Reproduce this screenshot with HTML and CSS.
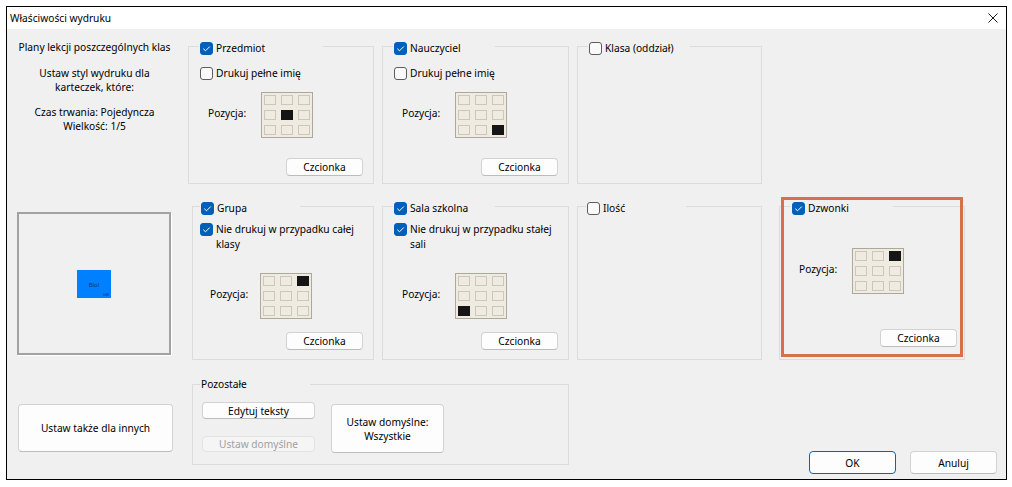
FILE: index.html
```html
<!DOCTYPE html>
<html lang="pl">
<head>
<meta charset="utf-8">
<title>Właściwości wydruku</title>
<link rel="stylesheet" href="styles.css">
</head>
<body>
<div class="window">
  <div class="titlebar">
    <span class="title">Właściwości wydruku</span>
    <svg class="close" viewBox="0 0 10 10"><path d="M0.5 0.5 L9.5 9.5 M9.5 0.5 L0.5 9.5" stroke="#1a1a1a" stroke-width="1" fill="none"/></svg>
  </div>
  <div class="content">
    <div class="info">
      <p>Plany lekcji poszczególnych klas</p>
      <p class="p2">Ustaw styl wydruku dla<br>karteczek, które:</p>
      <p class="p3">Czas trwania: Pojedyncza<br>Wielkość: 1/5</p>
    </div>

    <fieldset class="group prz">
      <legend class="wide"><span class="cb on"><svg viewBox="0 0 13 13"><path d="M3.3 6.7 L5.5 8.8 L9.8 4.5"/></svg></span><span>Przedmiot</span></legend>
      <div class="opt"><span class="cb"></span><span>Drukuj pełne imię</span></div>
      <div class="pos">
        <span class="pos-label">Pozycja:</span>
        <div class="pgrid"><i></i><i></i><i></i><i></i><i class="sel"></i><i></i><i></i><i></i><i></i></div>
      </div>
      <button class="btn font">Czcionka</button>
    </fieldset>

    <fieldset class="group nau">
      <legend><span class="cb on"><svg viewBox="0 0 13 13"><path d="M3.3 6.7 L5.5 8.8 L9.8 4.5"/></svg></span><span>Nauczyciel</span></legend>
      <div class="opt"><span class="cb"></span><span>Drukuj pełne imię</span></div>
      <div class="pos">
        <span class="pos-label">Pozycja:</span>
        <div class="pgrid"><i></i><i></i><i></i><i></i><i></i><i></i><i></i><i></i><i class="sel"></i></div>
      </div>
      <button class="btn font">Czcionka</button>
    </fieldset>

    <fieldset class="group kla">
      <legend><span class="cb"></span><span>Klasa (oddział)</span></legend>
    </fieldset>

    <div class="preview">
      <div class="tile"><span class="tb">Biol</span><span class="tk">kW</span></div>
    </div>

    <fieldset class="group r2 gru">
      <legend><span class="cb on"><svg viewBox="0 0 13 13"><path d="M3.3 6.7 L5.5 8.8 L9.8 4.5"/></svg></span><span>Grupa</span></legend>
      <div class="opt"><span class="cb on"><svg viewBox="0 0 13 13"><path d="M3.3 6.7 L5.5 8.8 L9.8 4.5"/></svg></span><span>Nie drukuj w przypadku całej<br>klasy</span></div>
      <div class="pos">
        <span class="pos-label">Pozycja:</span>
        <div class="pgrid"><i></i><i></i><i class="sel"></i><i></i><i></i><i></i><i></i><i></i><i></i></div>
      </div>
      <button class="btn font">Czcionka</button>
    </fieldset>

    <fieldset class="group r2 sal">
      <legend><span class="cb on"><svg viewBox="0 0 13 13"><path d="M3.3 6.7 L5.5 8.8 L9.8 4.5"/></svg></span><span>Sala szkolna</span></legend>
      <div class="opt"><span class="cb on"><svg viewBox="0 0 13 13"><path d="M3.3 6.7 L5.5 8.8 L9.8 4.5"/></svg></span><span>Nie drukuj w przypadku stałej<br>sali</span></div>
      <div class="pos">
        <span class="pos-label">Pozycja:</span>
        <div class="pgrid"><i></i><i></i><i></i><i></i><i></i><i></i><i class="sel"></i><i></i><i></i></div>
      </div>
      <button class="btn font">Czcionka</button>
    </fieldset>

    <fieldset class="group r2 ilo">
      <legend><span class="cb"></span><span>Ilość</span></legend>
    </fieldset>

    <div class="dzw-wrap">
      <fieldset class="group r2 dzw">
        <legend><span class="cb on"><svg viewBox="0 0 13 13"><path d="M3.3 6.7 L5.5 8.8 L9.8 4.5"/></svg></span><span>Dzwonki</span></legend>
        <div class="pos">
          <span class="pos-label">Pozycja:</span>
          <div class="pgrid"><i></i><i></i><i class="sel"></i><i></i><i></i><i></i><i></i><i></i><i></i></div>
        </div>
        <button class="btn font">Czcionka</button>
      </fieldset>
      <div class="highlight"></div>
    </div>

    <button class="btn also">Ustaw także dla innych</button>

    <fieldset class="group poz">
      <legend class="plain">Pozostałe</legend>
      <div class="poz-body">
        <div class="poz-col">
          <button class="btn small">Edytuj teksty</button>
          <button class="btn small dis" disabled>Ustaw domyślne</button>
        </div>
        <button class="btn big">Ustaw domyślne:<br>Wszystkie</button>
      </div>
    </fieldset>

    <div class="actions">
      <button class="btn act ok">OK</button>
      <button class="btn act">Anuluj</button>
    </div>
  </div>
</div>
</body>
</html>
```
FILE: styles.css
```css
* { box-sizing: border-box; }
html, body { margin: 0; padding: 0; background: #fff; }
body {
  font-family: "Noto Sans", "Segoe UI", sans-serif;
  font-size: 10.2px;
  line-height: 14px;
  color: #000;
}
.window {
  margin: 6px 0 0 6px;
  width: 1001px;
  height: 474px;
  border: 1px solid #000;
  background: #f0f0f0;
  display: flex;
  flex-direction: column;
}
.titlebar {
  height: 22px;
  flex: none;
  background: #fff;
  display: flex;
  align-items: center;
  justify-content: space-between;
  padding: 0 8px 0 3px;
}
.close { width: 10px; height: 10px; }

.content {
  flex: 1;
  display: grid;
  grid-template-columns: 163px 186px 187px 185px 1fr;
  grid-template-rows: 144px 160px 1fr;
  column-gap: 8px;
  row-gap: 16px;
  grid-template-areas:
    "info prz nau kla ."
    "prev gru sal ilo dzw"
    "also poz poz . act";
  padding: 11px 9px 5px 10px;
}

.info { grid-area: info; width: 155px; text-align: center; }
.info p { margin: 0; }
.info .p2 { margin-top: 12px; }
.info .p3 { margin-top: 11px; }

/* group boxes */
.group {
  margin: 0;
  padding: 0;
  min-width: 0;
  border: 1px solid #dcdcdc;
  display: flex;
  flex-direction: column;
  align-items: flex-start;
}
.group > legend {
  margin-left: 10px;
  padding: 4px 0 0 1px;
  width: 102px;
  height: 12px;
  display: flex;
  align-items: center;
  gap: 3px;
  white-space: nowrap;
}
.group > legend.wide { width: 124px; }
.group > legend.plain { width: 110px; padding: 0 0 0 1px; margin-left: 7px; }

.prz { grid-area: prz; }
.nau { grid-area: nau; }
.kla { grid-area: kla; }
.gru { grid-area: gru; margin-left: 4px; }
.gru > legend { margin-left: 7px; width: 100px; }
.gru .opt { margin-left: 7px; }
.gru .pos { padding-left: 17px; }
.gru .pos-label { width: 50px; }
.sal { grid-area: sal; }
.ilo { grid-area: ilo; }
.ilo > legend { margin-left: 8px; width: 100px; }

/* checkbox */
.cb {
  flex: none;
  width: 13px;
  height: 13px;
  border: 1px solid #5d5d5d;
  border-radius: 3px;
  background: #fafafa;
  display: inline-flex;
}
.cb.on { background: #005fb8; border-color: #005fb8; }
.cb svg { width: 11px; height: 11px; }
.cb svg path { fill: none; stroke: #fff; stroke-width: 1; }
.cb.on svg { width: 13px; height: 13px; margin: -1px; }

.opt {
  display: flex;
  align-items: flex-start;
  gap: 3px;
  margin: 14px 0 0 11px;
  line-height: 15px;
  white-space: nowrap;
}
.opt .cb { margin-top: 1px; }

.pos {
  display: flex;
  align-items: center;
  margin-top: 11px;
  padding-left: 19px;
}
.pos-label { width: 53px; padding-bottom: 5px; }
.pgrid {
  width: 52px;
  height: 46px;
  border: 1px solid #aca89c;
  background: #efebe0;
  padding: 2px;
  display: grid;
  grid-template-columns: repeat(3, 12px);
  grid-template-rows: repeat(3, 10px);
  column-gap: 5px;
  row-gap: 5px;
}
.pgrid i { border: 1px solid #cbc7bc; background: #efebe0; }
.pgrid i.sel { background: #151515; border-color: #151515; }

/* buttons */
.btn {
  font: inherit;
  color: #000;
  background: #fdfdfd;
  border: 1px solid #d2d2d2;
  border-bottom-color: #bcbcbc;
  border-radius: 4px;
  padding: 0;
  margin: 0;
  line-height: 14px;
}
.btn.font {
  width: 77px;
  height: 18px;
  align-self: flex-end;
  margin: auto 10px 7px 0;
}
.r2 .opt { margin-top: 10px; }
.r2 .pos { margin-top: 21px; }
.r2 .btn.font { margin-bottom: 9px; }

/* preview */
.preview {
  grid-area: prev;
  align-self: start;
  margin-top: 12px;
  width: 154px;
  height: 143px;
  border: 2px solid #a2a2a2;
  box-shadow: 1px 1px 0 #fff;
  display: flex;
  align-items: center;
  justify-content: center;
}
.tile {
  width: 34px;
  height: 28px;
  background: #0080ff;
  color: #06346a;
  display: flex;
  flex-direction: column;
  align-items: center;
  justify-content: flex-end;
  padding: 0 2px 1px;
}
.tb { font-size: 6px; line-height: 7px; margin-bottom: 3px; }
.tk { font-size: 4px; line-height: 5px; align-self: flex-end; }

/* Dzwonki with highlight */
.dzw-wrap { grid-area: dzw; position: relative; display: flex; }
.dzw { margin-left: 9px; width: 186px; }
.dzw > legend { margin-left: 11px; }
.dzw .pos { margin-top: 36px; }
.dzw .btn.font { margin: auto 7px 12px 0; }
.highlight {
  position: absolute;
  left: 11px;
  top: -3px;
  width: 182px;
  height: 160px;
  border: 3px solid #d6724b;
  pointer-events: none;
}

/* bottom row */
.also {
  grid-area: also;
  align-self: start;
  margin: 28px 0 0 1px;
  width: 155px;
  height: 48px;
}
.poz {
  grid-area: poz;
  align-self: start;
  margin: 2px 0 0 4px;
  height: 87px;
}
.poz-body { display: flex; margin: 12px 0 0 9px; }
.poz-col { display: flex; flex-direction: column; gap: 17px; }
.btn.small { width: 113px; height: 17px; }
.btn.small.dis { height: 16px; color: #a0a0a0; background: #f5f5f5; border-color: #e3e3e3; }
.btn.big { width: 113px; height: 49px; margin: 2px 0 0 16px; }

.actions {
  grid-area: act;
  display: flex;
  justify-content: flex-end;
  align-items: flex-end;
  gap: 14px;
}
.btn.act { width: 87px; height: 23px; }
.btn.ok { border-color: #0067c0; }
```
